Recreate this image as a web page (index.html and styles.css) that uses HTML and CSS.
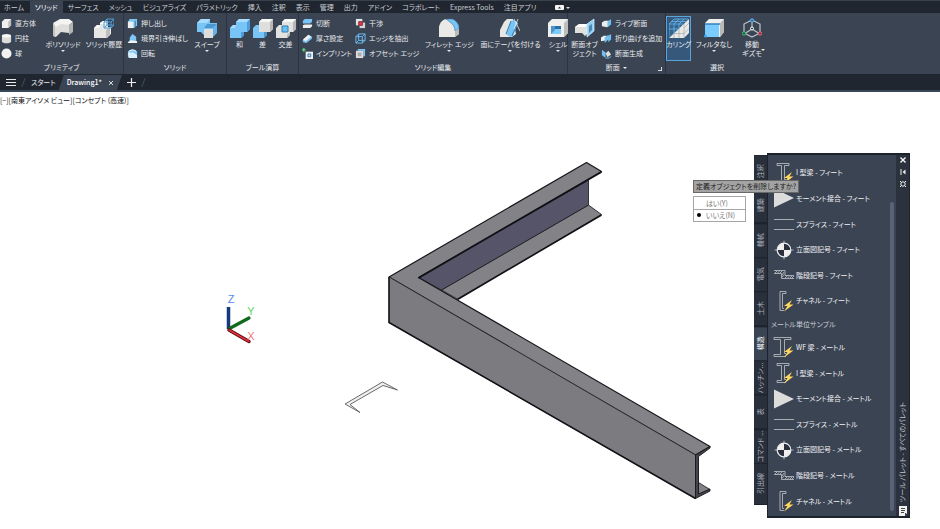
FILE: index.html
```html
<!DOCTYPE html>
<html lang="ja">
<head>
<meta charset="utf-8">
<title>Drawing1</title>
<meta name="viewport" content="width=device-width, initial-scale=1">
<link rel="stylesheet" href="styles.css">
</head>
<body>
<svg class="defs" aria-hidden="true">
  <defs>
    <symbol id="ibeam" viewBox="0 0 22 22"><path d="M4 1.500h12v2h-4.500v14H13M4 1.500v2h4.500v15H4v2h9" class="ln"/><path d="M19 10l-8 6h3.500l-3.500 5.500 9.500-7h-4z" class="bolt"/></symbol>
    <symbol id="wf" viewBox="0 0 22 22"><path d="M1 1.500h17v2h-6.500v14H13M1 1.500v2h6.500v15H1v2h12" class="ln"/><path d="M19 10l-8 6h3.500l-3.500 5.500 9.500-7h-4z" class="bolt"/></symbol>
    <symbol id="moment" viewBox="0 0 22 22"><path d="M1 1.500L21 11 1 20.500z" fill="#dcdcdc"/></symbol>
    <symbol id="splice" viewBox="0 0 22 22"><path d="M1 6.500h20M1 16.500h20" class="ln"/></symbol>
    <symbol id="elev" viewBox="0 0 22 22"><path d="M11 1.500v19M1.500 11h19" class="ln"/><circle cx="11" cy="11" r="6.800" fill="#2a313d" stroke="#f0f0f0" stroke-width="1.200"/><path d="M11 11V4.200A6.800 6.800 0 0 0 4.200 11zM11 11v6.800A6.800 6.800 0 0 0 17.800 11z" fill="#f0f0f0"/></symbol>
    <symbol id="stair" viewBox="0 0 22 22"><path d="M1 6.500h11v5h9M1 9.500h7.500v5H21" class="ln"/><path d="M2 9l2-2M4.500 9l2-2M7 9l2-2M9 11l2-3M9 13.500l2-3M12 14l2-2M14.500 14l2-2M17 14l2-2M19 14l2-2" class="ln"/></symbol>
    <symbol id="channel" viewBox="0 0 22 22"><path d="M13 3.500v-2H7v19h4M13 3.500H9.500v15H11" class="ln"/><path d="M19 10l-8 6h3.500l-3.500 5.500 9.500-7h-4z" class="bolt"/></symbol>
  </defs>
</svg>

<div class="app">
  <nav class="menu" aria-label="リボン タブ">
    <button>ホーム</button>
    <button class="on">ソリッド</button>
    <button>サーフェス</button>
    <button>メッシュ</button>
    <button>ビジュアライズ</button>
    <button>パラメトリック</button>
    <button>挿入</button>
    <button>注釈</button>
    <button>表示</button>
    <button>管理</button>
    <button>出力</button>
    <button>アドイン</button>
    <button>コラボレート</button>
    <button>Express Tools</button>
    <button>注目アプリ</button>
    <button class="mini" aria-label="リボンの表示"><svg viewBox="0 0 16 7" width="16" height="7"><rect x="1" y="1" width="9" height="5" rx="1" fill="#f4f4f4"/><path d="M4 4.500l1.500-2L7 4.500z" fill="#333"/><path d="M12 3h4l-2 2z" fill="#ddd"/></svg></button>
  </nav>

  <div class="ribbon">
    <section class="panel p1">
      <div class="body">
        <div class="smalls">
          <button class="sm"><svg viewBox="0 0 12 12"><path d="M1 4l3-3h7v7l-3 3H1z" fill="#f0f0ee"/><path d="M8 4l3-3v7l-3 3z" fill="#bcbcba"/></svg>直方体</button>
          <button class="sm"><svg viewBox="0 0 12 12"><path d="M1 3v6c0 3 10 3 10 0V3z" fill="#dcdcda"/><ellipse cx="6" cy="3" rx="5" ry="2" fill="#f7f7f5"/></svg>円柱</button>
          <button class="sm"><svg viewBox="0 0 12 12"><circle cx="6" cy="6" r="5.500" fill="#f2f2f0"/></svg>球</button>
        </div>
        <button class="lg w44"><svg viewBox="0 0 20 20"><path d="M0 6l4-1v13l-2 1-2-1z" fill="#c2c2c0"/><path d="M2 6l6-2 8 1v10l-8-1-4 4-2 1z" fill="#dededc"/><path d="M0 5l7-4h9l4 3-4 3-8-1-5 3z" fill="#f4f4f2"/><path d="M16 7l4-3v10l-4 3z" fill="#b3b3b1"/></svg>ポリソリッド<i></i></button>
        <button class="lg w38"><svg viewBox="0 0 20 20"><path d="M0 10l3-3h3V5l3-2h5v6h3v7l-4 4H0z" fill="#e6e6e4"/><path d="M0 10l3-3h3l-1 3zM6 5l3-2h5l-2 3H6z" fill="#fafaf8"/><path d="M12 12l4-3v8l-4 3z" fill="#bebebc"/><path d="M10 4h7v6h-7zM10 4l3-3h7v6l-3 3M17 4l3-3M13 1v6h7M13 7l-3 3" fill="none" stroke="#4e9edb"/></svg>ソリッド履歴</button>
      </div>
      <h2>プリミティブ</h2>
    </section>

    <section class="panel p2">
      <div class="body">
        <div class="smalls">
          <button class="sm"><svg viewBox="0 0 12 12"><path d="M1 4l2-3h8v7l-3 3H1z" fill="#7dc6f5"/><path d="M1 4h6v7H1z" fill="#eee"/><path d="M9 10V3" stroke="#2d6fa8"/></svg>押し出し</button>
          <button class="sm"><svg viewBox="0 0 12 12"><path d="M3 5l3-4 4 3v4l1 3H1l2-3z" fill="#7dc6f5"/><path d="M1 10l3-2 7 1v2H1z" fill="#f1f1f1"/></svg>境界引き伸ばし</button>
          <button class="sm"><svg viewBox="0 0 12 12"><path d="M1 4c2-3 8-3 10 0v6H1z" fill="#7dc6f5"/><path d="M1 5h6l4 3v3H2z" fill="#d9eefa"/><path d="M2 4c3-3 6-2 8 0" fill="none" stroke="#fff"/></svg>回転</button>
        </div>
        <button class="lg w38"><svg viewBox="0 0 20 20"><path d="M0 5l4-4h9v4h7v9l-4 3h-9l-3-3H0z" fill="#79c4f7"/><path d="M0 5l4-4h9l-3 4z" fill="#a7dcff"/><path d="M7 10l3-4h10l-4 4z" fill="#4b98d2"/><path d="M16 10l4-4v9l-4 4z" fill="#64b2ea"/><path d="M7 11h9v9H7z" fill="#ddd"/></svg>スイープ<i></i></button>
      </div>
      <h2>ソリッド</h2>
    </section>

    <section class="panel p3">
      <div class="body">
        <button class="lg w23"><svg viewBox="0 0 20 20"><path d="M0 10l3-3h3V4l3-3h11v10l-3 3h-3v3l-3 3H0z" fill="#79c4f7"/><path d="M0 10l3-3h3l-1 3zM6 4l3-3h11l-3 3z" fill="#a9dcff"/><path d="M17 4l3-3v10l-3 3zM11 17v-3h3v3l-3 3z" fill="#4b9fdc"/></svg>和</button>
        <button class="lg w23"><svg viewBox="0 0 20 20"><path d="M0 10l3-3h11v10l-3 3H0z" fill="#79c4f7"/><path d="M11 14h3v3l-3 3z" fill="#4797d2"/><path d="M6 4l3-3h11v10l-3 3H6z" fill="#dededc"/><path d="M6 4l3-3h11l-3 3z" fill="#f6f6f4"/><path d="M17 4l3-3v10l-3 3z" fill="#b8b8b6"/></svg>差</button>
        <button class="lg w23"><svg viewBox="0 0 20 20"><path d="M0 10l3-3h3V4l3-3h11v10l-3 3h-3v3l-3 3H0z" fill="#e2e2e0"/><path d="M6 4l3-3h11l-3 3z" fill="#f8f8f6"/><path d="M17 4l3-3v10l-3 3zM11 17l3-3v3l-3 3z" fill="#b8b8b6"/><path d="M6 8h6v6H6z" fill="#66c3f5" stroke="#367dad"/></svg>交差</button>
      </div>
      <h2>ブール演算</h2>
    </section>

    <section class="panel p4">
      <div class="body">
        <div class="smalls c1">
          <button class="sm"><svg viewBox="0 0 12 12"><path d="M1 3l2-2h8v3L9 6H1z" fill="#79c4f7"/><path d="M1 8l2-1h8v2l-2 2H1z" fill="#eee"/></svg>切断</button>
          <button class="sm"><svg viewBox="0 0 12 12"><path d="M1 8l6-6 4 2v2l-6 5-4-1z" fill="#79c4f7"/><path d="M1 7l6-5 3 2-6 5z" fill="#f2f2f2"/></svg>厚さ設定</button>
          <button class="sm"><svg viewBox="0 0 12 12"><path d="M0 2h4M2 0v4" stroke="#58d47a" stroke-width="1.500"/><path d="M4 4h8v8H4z" fill="#eee"/><path d="M6.500 6.500h3v3h-3z" fill="#bde4ff" stroke="#2876ad"/></svg>インプリント</button>
        </div>
        <div class="smalls c2">
          <button class="sm"><svg viewBox="0 0 12 12"><path d="M1 1h7v7H1z" fill="#e5e5e5"/><path d="M5 5h6v6H5z" fill="#d5d5d5"/><path d="M4 4h4v4H4z" fill="#e33c49" stroke="#7c2631"/></svg>干渉</button>
          <button class="sm"><svg viewBox="0 0 12 12"><path d="M1 4h7v7H1zM1 4l3-3h7v7l-3 3M8 4l3-3M4 1v7h7M4 8l-3 3" fill="none" stroke="#70c2f8"/></svg>エッジを抽出</button>
          <button class="sm"><svg viewBox="0 0 12 12"><path d="M3 1h8v8H9V3H3z" fill="#79c4f7"/><path d="M1 3h8v8H1z" fill="#ddd"/><path d="M3 5h4v4H3z" fill="#aaa"/></svg>オフセット エッジ</button>
        </div>
        <button class="lg w60"><svg viewBox="0 0 20 20"><path d="M0 19V9C1 4 4 1 8 1h4c5 1 8 5 8 9v6l-4 3z" fill="#e9e9e7"/><path d="M7 1h6c5 2 7 6 7 10l-4 2c0-4-2-7-5-9z" fill="#75c5f8" stroke="#356f9c" stroke-width=".6"/><path d="M16 13l4-2v5l-4 3z" fill="#bbb"/></svg>フィレット エッジ<i></i></button>
        <button class="lg w62"><svg viewBox="0 0 20 20"><path d="M0 19V12l4-8 3-3h6l3 15-4 3z" fill="#e6e6e4"/><path d="M6 16L11 3l3-1 4 3-5 13-3 1z" fill="#79c4f7"/><path d="M6 16L11 3M12 18l5-12" stroke="#2f7db6"/><path d="M14 1l6 12M18 1l-4 10" stroke="#eee" stroke-width=".8"/></svg>面にテーパを付ける<i></i></button>
        <button class="lg w33"><svg viewBox="0 0 20 20"><path d="M0 5l4-4h16v14l-4 4H0z" fill="#efefed"/><path d="M16 5l4-4v14l-4 4z" fill="#bdbdbb"/><path d="M3 8h10v8H3z" fill="#286fa6"/><path d="M3 12l4-1h6v5H3z" fill="#7ecafa"/><path d="M3 8h4v4l-4 4z" fill="#4795ce"/></svg>シェル<i></i></button>
      </div>
      <h2>ソリッド編集</h2>
    </section>

    <section class="panel p5">
      <div class="body">
        <button class="lg w33"><svg viewBox="0 0 20 20"><path d="M0 9l4-3h9v9l-3 3-3-3H0z" fill="#e0e0de"/><path d="M0 9l4-3h9l-3 3z" fill="#fff"/><path d="M12 6l7-5v12l-7 6z" fill="#8ccff8" stroke="#e6f5ff" stroke-width=".7"/><path d="M14 8l3-2v6l-3 3z" fill="#4f87b0"/></svg>断面オブ<br>ジェクト</button>
        <div class="smalls">
          <button class="sm"><svg viewBox="0 0 12 12"><path d="M1 5l3-2h5v5l-2 2-6-1z" fill="#eee"/><path d="M7 4l4-3v6l-4 3z" fill="#70bff0"/></svg>ライブ断面</button>
          <button class="sm"><svg viewBox="0 0 12 12"><path d="M0 5l3-2h3v5l-6 1z" fill="#eee"/><path d="M4 5l4-3v5l-4 4zM8 3l3-2v6l-3 3z" fill="#70bff0"/></svg>折り曲げを追加</button>
          <button class="sm"><svg viewBox="0 0 12 12"><path d="M1 2l4 3v6l-4-3z" fill="#70bff0"/><path d="M5 6l3-3 3 4-4 3z" fill="#ddd"/><path d="M5 11h4l2-2" fill="none" stroke="#70bff0"/></svg>断面生成</button>
        </div>
      </div>
      <h2>断面 <span class="tri"></span><button class="launch" aria-label="断面の設定"></button></h2>
    </section>

    <section class="panel p6">
      <div class="body">
        <button class="lg w25 on"><svg viewBox="0 0 20 20"><path d="M0 6l5-5h15L0 20z" fill="#35668e"/><path d="M20 1v14l-5 5H0z" fill="#e9e9e7"/><path d="M0 6h14M0 11h9M0 6v12M5 6v10M10 6v5M0 6l5-5h14M5 6l5-5M10 6l5-5M2 3.500h15" fill="none" stroke="#6bb7ee" stroke-width=".8"/><path d="M5 16v4M10 11v9M15 6v14M5 15.500h10l5-5M15 10l5-5" fill="none" stroke="#aaa" stroke-width=".7"/></svg>カリング</button>
        <button class="lg w44"><svg viewBox="0 0 20 20"><path d="M1 5l4-4h15v13l-4 5H1z" fill="#efefed"/><path d="M16 5l4-4v13l-4 5z" fill="#b8b8b6"/><path d="M1 6h14v13H1z" fill="#7acbff"/><path d="M1 6h15" stroke="#3483bb" stroke-width="1.500"/><circle cx="1.500" cy="18" r="1.500" fill="#42a8ef"/></svg>フィルタなし<i></i></button>
        <button class="lg w30"><svg viewBox="0 0 20 20"><path d="M10 2l8 4v9l-8 4-8-4V6zM10 11V3M10 11l8 5M10 11l-8 5" fill="none" stroke="#bcc4cd" stroke-width="1.200"/><circle cx="10" cy="2.500" r="1.700" fill="#2e6e9b" stroke="#5ab7f2"/><circle cx="2" cy="15.500" r="1.700" fill="#28553d" stroke="#42bd73"/><circle cx="18" cy="15.500" r="1.700" fill="#713b48" stroke="#ee6874"/><circle cx="10" cy="10.500" r="1.500" fill="#3b4453" stroke="#fff"/></svg>移動<br>ギズモ<i class="side"></i></button>
      </div>
      <h2>選択</h2>
    </section>
  </div>

  <nav class="files" aria-label="ファイル タブ">
    <button class="burger" aria-label="メニュー"><svg viewBox="0 0 10 9" width="10" height="9"><path d="M0 1.500h10M0 4.500h10M0 7.500h10" stroke="#e8e8e8"/></svg></button>
    <span class="slash"></span>
    <button class="start">スタート</button>
    <button class="doc">Drawing1*<svg viewBox="0 0 6 6" width="6" height="6"><path d="M1 1l4 4M5 1L1 5" stroke="#d5d8dc"/></svg></button>
    <button class="plus" aria-label="新規図面"><svg viewBox="0 0 9 9" width="9" height="9"><path d="M4.500 0v9M0 4.500h9" stroke="#eee" stroke-width="1.200"/></svg></button>
    <span class="slash"></span>
  </nav>

  <main class="canvas">
    <p class="view">[−][南東アイソメ ビュー][コンセプト (高速)]</p>
    <svg class="model" viewBox="0 92 940 437" preserveAspectRatio="xMinYMin meet">
      <g stroke="#16161a" stroke-linejoin="round">
        <path d="M441.500 290L588.500 205 601.500 214.500 457.500 299z" fill="#838387" stroke-width=".8"/>
        <path d="M418.500 277.500L588.500 180V205L441.500 290z" fill="#565469" stroke-width=".8"/>
        <path d="M389 277L586.500 162.500 601.500 171.500 418.500 277.500 710 446.500 695.500 455z" fill="#838387" stroke-width="1.200"/>
        <path d="M389 277L695.500 455V498.500L389 322.500z" fill="#7c7b80" stroke-width=".5"/>
        <path d="M698.500 482.500L710 489.500 698 495z" fill="#838387" stroke-width=".8"/>
        <path d="M695.500 455L710 446.500V448L698.500 456.500V494L710 489V491L695.500 498.500z" fill="#44444d" stroke-width=".9"/>
      </g>
      <path d="M389 277V322.500L695.500 498.500M601.500 172L418.500 278M601.500 215L457.500 299.500" fill="none" stroke="#111116" stroke-width="1.500"/>
      <path d="M345 404L382.500 382 397.500 390 383 385.500 350 404.500 360 412.500z" fill="#eee" stroke="#5c5c5c" stroke-width=".9" stroke-linejoin="round"/>
      <g stroke-linecap="round">
        <path d="M228.500 329V307" stroke="#16387f" stroke-width="3.500" stroke-linecap="butt"/>
        <path d="M229.500 328.500L249 318" stroke="#106a1c" stroke-width="3.200"/>
        <path d="M229 330L249 341.500" stroke="#5e0c12" stroke-width="3.500"/>
        <path d="M229 330L249 341.500" stroke="#e0303a" stroke-width="1.500"/>
      </g>
      <g class="axis" text-anchor="middle">
        <text x="231" y="303" fill="#4f8cf0">Z</text>
        <text x="251" y="315" fill="#5fd35f">Y</text>
        <text x="251" y="340" fill="#f07878">X</text>
      </g>
    </svg>

    <aside class="palette">
      <nav class="ptabs" aria-label="パレット">
        <button>注釈</button><button>建築</button><button>機械</button><button>電気</button><button>土木</button><button class="on">構造</button><button>ハッチン...</button><button>表</button><button>コマンド ...</button><button class="last">引出線</button>
      </nav>
      <div class="pmain">
        <div class="tools">
          <button><svg><use href="#ibeam"/></svg>I 型梁 - フィート</button>
          <button><svg><use href="#moment"/></svg>モーメント接合 - フィート</button>
          <button><svg><use href="#splice"/></svg>スプライス - フィート</button>
          <button><svg><use href="#elev"/></svg>立面図記号 - フィート</button>
          <button><svg><use href="#stair"/></svg>階段記号 - フィート</button>
          <button><svg><use href="#channel"/></svg>チャネル - フィート</button>
          <h3>メートル単位サンプル</h3>
          <button><svg><use href="#wf"/></svg>WF 梁 - メートル</button>
          <button><svg><use href="#ibeam"/></svg>I 型梁 - メートル</button>
          <button><svg><use href="#moment"/></svg>モーメント接合 - メートル</button>
          <button><svg><use href="#splice"/></svg>スプライス - メートル</button>
          <button><svg><use href="#elev"/></svg>立面図記号 - メートル</button>
          <button><svg><use href="#stair"/></svg>階段記号 - メートル</button>
          <button><svg><use href="#channel"/></svg>チャネル - メートル</button>
        </div>
        <div class="scroll"></div>
        <div class="title">
          <button aria-label="閉じる"><svg viewBox="0 0 8 8"><path d="M1.500 1.500l5 5M6.500 1.500l-5 5" stroke="#fff" stroke-width="1.300"/></svg></button>
          <button aria-label="自動的に隠す"><svg viewBox="0 0 8 8"><path d="M2 1v6" stroke="#eee"/><path d="M6.500 1.500v5L3.500 4z" fill="#eee"/></svg></button>
          <button aria-label="プロパティ"><svg viewBox="0 0 8 8"><circle cx="4" cy="4" r="2.200" fill="none" stroke="#eee"/><path d="M1 1l1.500 1.500M7 1L5.500 2.500M1 7l1.500-1.500M7 7L5.500 5.500" stroke="#eee"/></svg></button>
          <span class="name">ツール パレット - すべてのパレット</span>
          <svg class="sheet" viewBox="0 0 8 10"><path d="M0 0h8v7L6 10H0z" fill="#f0f0f0"/><path d="M2 2.500h4M2 4.500h4M2 6.500h3M6.500 7v3" stroke="#444"/></svg>
        </div>
      </div>
    </aside>

    <div class="prompt" role="dialog" aria-labelledby="ask">
      <p id="ask">定義オブジェクトを削除しますか?</p>
      <div class="choices">
        <button>はい(Y)</button>
        <button class="cur">いいえ(N)</button>
      </div>
    </div>
  </main>
</div>
</body>
</html>
```
FILE: styles.css
```css
* { box-sizing: border-box; }

body {
  margin: 0;
  background: #fff;
  color: #e8eaed;
  font: 7px/9px "Noto Sans CJK JP", "Noto Sans", sans-serif;
  font-feature-settings: "palt";
}

button {
  margin: 0;
  padding: 0;
  border: 0;
  background: none;
  color: inherit;
  font: inherit;
  font-feature-settings: inherit;
  white-space: nowrap;
}

h2, h3, p { margin: 0; font: inherit; }

.defs { position: absolute; width: 0; height: 0; }
.app { display: flex; flex-direction: column; height: 100vh; overflow: hidden; }

/* Ribbon tabs */
.menu {
  display: flex;
  flex: none;
  height: 13px;
  background: #20262f;
  border-top: 1px solid #39414d;
  color: #c9cdd3;
}
.menu button { padding: 0 5px; }
.menu button:first-child { padding: 0 6px 0 4px; }
.menu .on { background: #3b4453; color: #fff; }
.menu .mini { padding-left: 12px; }
.menu svg { display: block; }

/* Ribbon */
.ribbon { display: flex; flex: none; height: 61px; background: #3b4453; }
.panel {
  display: flex;
  flex: none;
  flex-direction: column;
  border-right: 1px solid #2d3441;
}
.p1 { width: 124px; }
.p2 { width: 103px; }
.p3 { width: 72px; }
.p4 { width: 269px; }
.p5 { width: 98px; }
.p6 { width: 102px; border: 0; }
.body { display: flex; flex: 1; padding-top: 3px; }
.panel h2 { position: relative; height: 13px; line-height: 12px; text-align: center; }

.smalls { display: flex; flex: 1; flex-direction: column; }
.sm { display: flex; align-items: center; gap: 3px; height: 15px; }
.sm svg { flex: none; width: 11px; height: 11px; }
.p2 .smalls, .p4 .smalls { padding-left: 3px; }
.p1 .smalls { padding-left: 1px; }
.p4 .c1 { flex: 0 0 50px; }
.p4 .c2 { flex: 0 0 65px; }

.lg {
  position: relative;
  display: flex;
  flex: none;
  flex-direction: column;
  align-items: center;
  height: 45px;
  padding-top: 1px;
  border: 1px solid transparent;
  text-align: center;
}
.lg svg { flex: none; width: 20px; height: 20px; margin-bottom: 2px; }
.lg.on { background: #36587a; border-color: #57a5dc; }
.lg i { border: 2px solid transparent; border-top-color: #e8e8e8; border-bottom: 0; margin-top: 1px; }
.lg .side { position: absolute; right: 1px; top: 31px; }
.w23 { width: 23px; }
.w25 { width: 25px; }
.w30 { width: 30px; }
.w33 { width: 33px; }
.w38 { width: 38px; }
.w44 { width: 44px; }
.w60 { width: 60px; }
.w62 { width: 62px; }
.p3 .body { padding-left: 1px; }
.p6 .lg { margin-right: 1px; }

.tri {
  display: inline-block;
  margin-left: 2px;
  border: 2px solid transparent;
  border-top-color: #eee;
  border-bottom: 0;
  vertical-align: 1px;
}
.launch {
  position: absolute;
  right: 3px;
  bottom: 3px;
  width: 4px;
  height: 4px;
  border-right: 1px solid #ddd;
  border-bottom: 1px solid #ddd;
}

/* Drawing tabs */
.files {
  display: flex;
  flex: none;
  align-items: stretch;
  height: 18px;
  padding: 1px 0 0 6px;
  background: #20262f;
  border-bottom: 2px solid #3a4557;
}
.files button { display: flex; align-items: center; }
.slash { width: 1px; margin: 3px 7px; background: #434b59; transform: skewX(-20deg); }
.doc {
  gap: 6px;
  padding: 0 8px;
  margin: 0 5px 0 3px;
  background: #3b4453;
  color: #fff;
  font-weight: 500;
  clip-path: polygon(5px 0, 100% 0, calc(100% - 5px) 100%, 0 100%);
}

/* Drawing area */
.canvas { position: relative; flex: 1; min-height: 0; background: #fff; }
.view { position: absolute; left: 0; top: 3px; color: #111; line-height: 10px; }
.model { display: block; width: 100%; height: 100%; }
.axis { font: 11px "Liberation Sans", sans-serif; }

/* Tool palette */
.palette {
  position: absolute;
  right: 30px;
  top: 61px;
  bottom: 11px;
  display: flex;
}
.ptabs {
  display: flex;
  flex-direction: column;
  width: 13px;
  margin: 2px 0 13px;
  background: #1d232c;
  color: #a9afb8;
}
.ptabs button {
  flex: 1;
  writing-mode: vertical-rl;
  text-orientation: sideways;
  transform: rotate(180deg);
  border-top: 1px solid #1a2029;
  background: #29303b;
  text-align: center;
}
.ptabs .last { flex: 0 0 41px; }
.ptabs .on { background: #3b4453; color: #fff; }
.pmain {
  display: flex;
  width: 143px;
  padding: 2px 0;
  background: #3b4453;
  border: 1px solid #1d232d;
  border-width: 2px 1px;
}
.tools { display: flex; flex: 1; flex-direction: column; padding: 3px 0 0 5px; }
.tools button { display: flex; flex: 1; align-items: center; gap: 1px; min-height: 0; color: #f2f3f5; }
.tools svg { flex: none; width: 22px; height: 22px; }
.tools h3 { height: 21px; margin-left: -2px; line-height: 20px; color: #c9cdd3; }
.ln { fill: none; stroke: #c3c7cc; stroke-width: .8; }
.bolt { fill: #ffd75e; }
.scroll { width: 4px; margin: 45px 2px 3px 0; border-radius: 2px; background: #586378; }
.title {
  display: flex;
  flex-direction: column;
  align-items: center;
  width: 13px;
  margin: -2px 0;
  background: #2b323e;
  gap: 4px;
  padding: 1px 0 0;
}
.title button, .title button svg { display: block; width: 8px; height: 8px; }
.name {
  margin-top: auto;
  writing-mode: vertical-rl;
  text-orientation: sideways;
  transform: rotate(180deg);
  white-space: nowrap;
  color: #c2c6cc;
}
.sheet { width: 8px; height: 10px; }

/* Command prompt at the cursor */
.prompt { position: absolute; right: 141px; top: 88px; color: #1c1c1c; }
.prompt p {
  padding: 0 2px;
  border: 1px solid #686868;
  background: #a3a3a3;
  line-height: 11px;
}
.choices { width: 53px; margin-top: 3px; border: 1px solid #a5a5a5; background: #fff; color: #777; }
.choices button { display: block; position: relative; width: 100%; height: 12px; padding-left: 12px; text-align: left; }
.choices button + button { border-top: 1px solid #a5a5a5; }
.cur::before {
  content: "";
  position: absolute;
  left: 3px;
  top: 3px;
  width: 4px;
  height: 4px;
  border-radius: 50%;
  background: #000;
}
```
